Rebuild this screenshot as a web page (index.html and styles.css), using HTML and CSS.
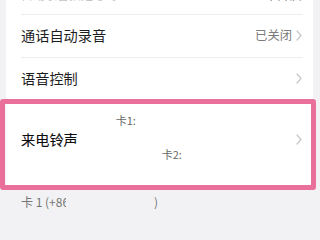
FILE: index.html
```html
<!DOCTYPE html>
<html lang="zh-CN">
<head>
<meta charset="utf-8">
<link rel="stylesheet" href="styles.css">
</head>
<body>
<div class="card">
  <div class="row row-top">
    <span class="sub">自动录音指定号码</span>
    <span class="spacer"></span>
    <span class="value faded">未开启</span>
  </div>
  <div class="row">
    <span class="title">通话自动录音</span>
    <span class="spacer"></span>
    <span class="value">已关闭</span>
    <svg class="chev" viewBox="0 0 6 11" width="6" height="11"><path d="M1 1 L5 5.5 L1 10" fill="none" stroke="#c6c6c6" stroke-width="1.2" stroke-linecap="round" stroke-linejoin="round"/></svg>
  </div>
  <div class="row">
    <span class="title">语音控制</span>
    <span class="spacer"></span>
    <svg class="chev" viewBox="0 0 6 11" width="6" height="11"><path d="M1 1 L5 5.5 L1 10" fill="none" stroke="#c6c6c6" stroke-width="1.2" stroke-linecap="round" stroke-linejoin="round"/></svg>
  </div>
  <div class="row row-ring">
    <span class="title title-strong">来电铃声</span>
    <div class="cards">
      <span class="card-line line1">卡1:</span>
      <span class="card-line line2">卡2:</span>
    </div>
    <span class="spacer"></span>
    <svg class="chev" viewBox="0 0 6 11" width="6" height="11"><path d="M1 1 L5 5.5 L1 10" fill="none" stroke="#c6c6c6" stroke-width="1.2" stroke-linecap="round" stroke-linejoin="round"/></svg>
    <div class="highlight"></div>
  </div>
</div>
<div class="section">
  <span class="sec-num">卡 1 (+86</span><span class="sec-close">)</span>
</div>
</body>
</html>
```
FILE: styles.css
```css
html, body {
  margin: 0;
  padding: 0;
}
body {
  width: 317px;
  height: 218px;
  overflow: hidden;
  background: #f2f2f4;
  font-family: "Noto Sans CJK SC", "Noto Sans", sans-serif;
  color: #1e1e1e;
}
.card {
  background: #ffffff;
  margin: -29px 4px 0 6px;
  padding-bottom: 8px;
}
.row {
  display: flex;
  align-items: center;
  margin: 0 10px 0 15px;
  padding-right: 1px;
  padding-bottom: 2px;
  height: 40px;
  border-bottom: 1px solid #ededed;
  position: relative;
}
.row-top {
  height: 43px;
  align-items: flex-end;
  padding-bottom: 0;
}
.row-top .sub,
.row-top .value {
  line-height: 16px;
  margin-bottom: 11px;
}
.sub {
  font-size: 12px;
  color: #c4c4c4;
}
.faded {
  color: #c4c4c4;
}
.spacer {
  flex: 1;
}
.title {
  font-size: 14.2px;
  line-height: 20px;
  color: #1e1e1e;
}
.title-strong {
  color: #0c0c0c;
  -webkit-text-stroke: 0.1px #0c0c0c;
}
.value {
  font-size: 12.3px;
  color: #7c7c7c;
  line-height: 16px;
}
.chev {
  margin-left: 4px;
  flex: none;
}
.row-ring {
  height: 76px;
  border-bottom: none;
}
.cards {
  display: flex;
  flex-direction: column;
  gap: 18px;
  margin-left: 38px;
  margin-bottom: 4px;
}
.card-line {
  font-size: 11px;
  line-height: 16px;
  color: #666666;
}
.line2 {
  margin-left: 46px;
}
.highlight {
  position: absolute;
  left: -21px;
  right: -13px;
  top: -2px;
  bottom: -11px;
  border: 5px solid #e8709a;
  border-radius: 3px;
  pointer-events: none;
}
.section {
  display: flex;
  margin-top: 6px;
  padding-left: 21px;
  font-size: 12px;
  line-height: 17px;
  color: #767676;
}
.sec-num {
  display: inline-block;
  width: 45px;
  overflow: hidden;
  white-space: nowrap;
}
.sec-close {
  margin-left: 88px;
}
```
